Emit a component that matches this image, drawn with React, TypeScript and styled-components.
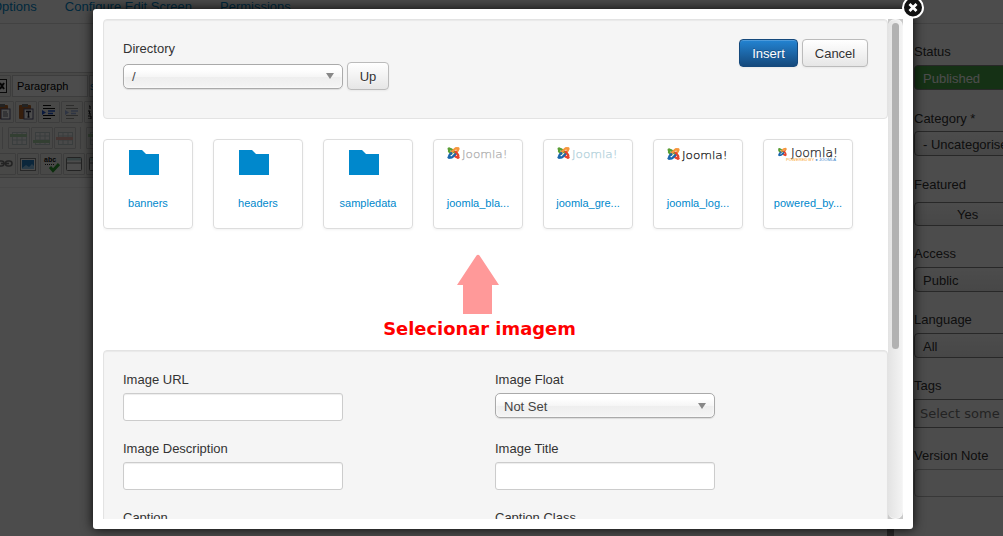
import React from "react";
import styled, { createGlobalStyle } from "styled-components";

const Global = createGlobalStyle`
  * { box-sizing: border-box; }
  html, body { margin: 0; height: 536px; overflow: hidden; background: #fff; }
  body { font: 13px/18px "Liberation Sans", Arial, sans-serif; color: #333; }
`;

const Screen = styled.div`
  position: relative;
  width: 1003px;
  height: 536px;
  overflow: hidden;
`;

/* ---------- page behind the dialog ---------- */
const Page = styled.div`
  display: flex;
  flex-direction: column;
  height: 100%;
`;
const TabBar = styled.nav`
  display: flex;
  flex: none;
  gap: 28px;
  height: 24px;
  margin-left: -8px;
  border-bottom: 1px solid #ddd;
`;
const Tab = styled.a`
  color: #08c;
  line-height: 14px;
  white-space: nowrap;
`;
const Columns = styled.div`
  display: flex;
  flex: 1;
  min-height: 0;
  justify-content: space-between;
`;
const Editor = styled.div`
  width: 894px;
  padding-top: 48px;
`;
const Toolbar = styled.div`
  height: 106px;
  border-top: 1px solid #ccc;
  border-bottom: 1px solid #ccc;
  background: #f0f0ee;
  overflow: hidden;
  padding-top: 2px;
`;
const EditArea = styled.div`
  height: 400px;
  margin-top: 9px;
  border-top: 1px solid #eee;
  border-right: 7px solid #888;
  background: #fff;
`;
const ToolRow = styled.div<{ $offset: number }>`
  display: flex;
  align-items: center;
  gap: 1px;
  height: 22px;
  margin: 0 0 4px ${(p) => p.$offset}px;
`;
const Tool = styled.span<{ $faded?: boolean }>`
  flex: none;
  display: flex;
  align-items: center;
  justify-content: center;
  width: 22px;
  height: 22px;
  border: 1px solid #ccc;
  border-radius: 1px;
  svg { opacity: ${(p) => (p.$faded ? 0.4 : 1)}; }
`;
const Divider = styled.span`
  flex: none;
  width: 1px;
  height: 22px;
  margin: 0 4px 0 3px;
  background: #ccc;
`;
const FormatSelect = styled.span<{ $link?: boolean }>`
  display: flex;
  align-items: center;
  width: 76px;
  height: 22px;
  padding-left: ${(p) => (p.$link ? 0 : 4)}px;
  border: 1px solid #ccc;
  background: #fff;
  color: ${(p) => (p.$link ? "#08c" : "#000")};
  font-size: 11px;
`;

const Sidebar = styled.aside`
  width: 89px;
  padding-top: 18px;
`;
const SideItem = styled.div<{ $height: number; $gap?: number }>`
  display: flex;
  flex-direction: column;
  gap: ${(p) => p.$gap ?? 5}px;
  height: ${(p) => p.$height}px;
  white-space: nowrap;
`;
const SideLabel = styled.label`
  height: 18px;
  line-height: 20px;
`;
const SideControl = styled.div<{ $kind?: "green" | "plain" | "tags" | "button" }>`
  flex: none;
  width: 220px;
  height: ${(p) => (p.$kind === "plain" ? 28 : p.$kind === "tags" ? 29 : p.$kind === "button" ? 24 : 25)}px;
  line-height: ${(p) => (p.$kind === "tags" ? 27 : p.$kind === "button" ? 23 : 25)}px;
  padding-left: ${(p) => (p.$kind === "button" ? 42 : p.$kind === "tags" ? 5 : 8)}px;
  border: 1px solid ${(p) => (p.$kind === "plain" ? "#bbb" : "#888")};
  border-radius: ${(p) => (p.$kind === "tags" ? 0 : 4)}px;
  background: ${(p) =>
    p.$kind === "green" ? "#46a546" : p.$kind === "plain" || p.$kind === "tags" ? "#fff" : "linear-gradient(#fff, #eee)"};
  color: ${(p) => (p.$kind === "green" ? "#fff" : p.$kind === "tags" ? "#777" : "#333")};
  ${(p) => p.$kind === "tags" && `font-family: "DejaVu Sans", sans-serif;`}
`;
const Overlay = styled.div`
  position: absolute;
  inset: 0;
  background: rgba(0, 0, 0, 0.7);
`;

/* ---------- dialog ---------- */
const Dialog = styled.div`
  position: absolute;
  left: 93px;
  top: 9px;
  width: 820px;
  height: 520px;
  padding: 10px;
  border-radius: 3px;
  background: #fff;
  box-shadow: 0 0 12px rgba(0, 0, 0, 0.9);
`;
const Close = styled.button`
  position: absolute;
  right: -12px;
  top: -14px;
  width: 24px;
  height: 25px;
  padding: 0;
  border: 0;
  background: none;
`;
const Frame = styled.div`
  display: flex;
  height: 500px;
  overflow: hidden;
`;
const Content = styled.div`
  width: 785px;
`;
const Well = styled.section<{ $height: number }>`
  height: ${(p) => p.$height}px;
  padding: 19px;
  border: 1px solid #e3e3e3;
  border-radius: 4px;
  background: #f5f5f5;
  box-shadow: inset 0 1px 1px rgba(0, 0, 0, 0.05);
`;
const TopWell = styled(Well)`
  display: flex;
  justify-content: space-between;
  align-items: flex-start;
`;
const Label = styled.label`
  display: block;
  height: 18px;
  line-height: 20px;
`;
const DirRow = styled.div`
  display: flex;
  align-items: center;
  gap: 4px;
  margin-top: 5px;
`;
const Select = styled.div`
  display: flex;
  align-items: center;
  justify-content: space-between;
  width: 220px;
  height: 25px;
  padding: 2px 8px 0;
  border: 1px solid #aaa;
  border-radius: 5px;
  background: linear-gradient(#fff 20%, #f6f6f6 50%, #eee 52%, #f4f4f4 100%);
  box-shadow: inset 0 0 3px #fff, 0 1px 1px rgba(0, 0, 0, 0.1);
  color: #444;
`;
const Caret = styled.i`
  margin-bottom: 2px;
  border: 4px solid transparent;
  border-top: 6px solid #888;
  border-bottom: 0;
`;
const Button = styled.button<{ $primary?: boolean; $width: number }>`
  width: ${(p) => p.$width}px;
  height: 28px;
  padding: 2px 0 0;
  border: 1px solid ${(p) => (p.$primary ? "#15497c" : "#bbb")};
  border-radius: 4px;
  background: ${(p) => (p.$primary ? "linear-gradient(#2384d3, #15497c)" : "linear-gradient(#fff, #e6e6e6)")};
  box-shadow: inset 0 1px 0 rgba(255, 255, 255, 0.2), 0 1px 2px rgba(0, 0, 0, 0.05);
  color: ${(p) => (p.$primary ? "#fff" : "#333")};
  text-shadow: ${(p) => (p.$primary ? "0 -1px 0 rgba(0,0,0,.25)" : "0 1px 1px rgba(255,255,255,.75)")};
  font: 13px/18px "Liberation Sans", Arial, sans-serif;
`;
const Actions = styled.div`
  display: flex;
  gap: 4px;
`;
const Thumbs = styled.div`
  display: flex;
  gap: 20px;
  margin-top: 20px;
`;
const Thumb = styled.a`
  display: flex;
  flex-direction: column;
  align-items: center;
  justify-content: space-between;
  width: 90px;
  height: 90px;
  padding: 6px 0 16px;
  border: 1px solid #ddd;
  border-radius: 4px;
  box-shadow: 0 1px 3px rgba(0, 0, 0, 0.055);
  color: #08c;
  font-size: 11px;
`;
const FolderIcon = styled.svg`
  margin: 4px 8px 0 0;
`;
const Hint = styled.div`
  display: flex;
  flex-direction: column;
  align-items: center;
  width: 193px;
  height: 121px;
  margin-left: 280px;
  padding-top: 25px;
  color: #f00;
  font: bold 17.9px/22px "DejaVu Sans", Verdana, sans-serif;
  white-space: nowrap;
`;
const Arrow = styled.svg`
  margin: 0 3px 4px 0;
`;
const Fields = styled.div`
  display: grid;
  grid-template-columns: 372px 220px;
  grid-auto-rows: 69px;
`;
const Field = styled.div`
  display: flex;
  flex-direction: column;
  gap: 5px;
`;
const Input = styled.input`
  width: 220px;
  height: 28px;
  border: 1px solid #ccc;
  border-radius: 3px;
  background: #fff;
  box-shadow: inset 0 1px 1px rgba(0, 0, 0, 0.075);
`;
const Scrollbar = styled.div`
  width: 15px;
  height: 500px;
  background: #c9c9c9;
`;
const Track = styled.div`
  height: 500px;
  padding: 3px 4px;
  border: solid #f6f6f6;
  border-width: 1px 1px 1px 0;
  border-radius: 7px;
  background: linear-gradient(90deg, #e3e3e3, #f3f3f3);
`;
const Handle = styled.div`
  width: 7px;
  height: 326px;
  border-radius: 4px;
  background: #b2b2b2;
`;

const Folder = () => (
  <FolderIcon width="30" height="25" viewBox="0 0 30 25">
    <path d="M0 0H13L17 4H30V25H0Z" fill="#08c" />
  </FolderIcon>
);

const Mark = () => (
  <g fill="none" strokeWidth="2.4" strokeLinecap="round" strokeLinejoin="round">
    <path d="M1.8 4.7C1.5 2.8 3.5 2.3 4.8 3.5L8.7 7.4" stroke="#5a9e35" />
    <path d="M1.8 4.7C2 5.7 3 6.2 4.2 7.4" stroke="#5a9e35" />
    <path d="M4.7 5.6L7.8 2.6C9 1.4 10.7 1.6 11 3.1" stroke="#f6953b" />
    <path d="M11 3.1C10.8 5 9.6 5.6 8.4 6.9" stroke="#f6953b" />
    <path d="M8.6 5.5L11 8.4C12 10 10.5 11.5 8.8 10.6L7.4 9.3" stroke="#e8432e" />
    <path d="M8.2 8L5.4 10.6C3.9 11.9 1.9 11.3 2 9.6C2.2 8.5 3 8 4.2 6.9" stroke="#1d67ad" />
    <g stroke="none">
      <circle cx="1.9" cy="2.4" r="1.7" fill="#5a9e35" />
      <circle cx="11" cy="2.2" r="1.7" fill="#f6953b" />
      <circle cx="11" cy="11.2" r="1.7" fill="#e8432e" />
      <circle cx="1.9" cy="11.2" r="1.7" fill="#1d67ad" />
    </g>
  </g>
);

const Logo = ({ color, powered, dy = 0 }: { color: string; powered?: boolean; dy?: number }) => (
  <svg width="62" height="18" viewBox="0 0 62 18">
    <g transform={powered ? "translate(1 1.5) scale(.68)" : `translate(.3 ${dy + 0.5}) scale(.97)`}>
      <Mark />
    </g>
    <text
      x={powered ? 14 : 15}
      y={powered ? 10.5 : 11.5 + dy}
      textLength={powered ? 47 : 45.5}
      lengthAdjust="spacingAndGlyphs"
      fill={color}
      fontFamily="'DejaVu Sans', sans-serif"
      fontWeight="200"
      stroke={color}
      strokeWidth=".25"
      fontSize={powered ? 12 : 10.5}
    >
      Joomla!
    </text>
    {powered && (
      <text x="9" y="15.4" fontFamily="Liberation Sans, sans-serif" fontSize="4" textLength="50" lengthAdjust="spacingAndGlyphs">
        <tspan fill="#f9a125">POWERED BY </tspan>
        <tspan fill="#3a85cb">● JOOMLA</tspan>
      </text>
    )}
  </svg>
);

const Clipboard = ({ text }: { text?: boolean }) => (
  <svg width="16" height="16" viewBox="0 0 16 16">
    <rect x="1" y="1" width="12" height="14" rx="1" fill="#b5652b" />
    <rect x="4" y="0" width="6" height="3" fill="#777" />
    <rect x="6" y="5" width="9" height="10" fill="#fff" stroke="#557" />
    <path d={text ? "M8 7.5H13M10.5 7V13M9.5 13H11.5" : "M8 8H12M8 10H13M8 12H13"} stroke="#223" strokeWidth={text ? 1.4 : 0.7} />
  </svg>
);
const Indent = () => (
  <svg width="14" height="14" viewBox="0 0 14 14">
    <path d="M1 .5H9M1 13.5H9M1 3.5H13M1 10.5H13" stroke="#111" />
    <path d="M6 6H13M6 8.5H11" stroke="#25c" strokeWidth="1.5" />
    <path d="M0 5L4 7.5L0 10Z" fill="#25c" />
  </svg>
);
const NumberList = () => (
  <svg width="14" height="14" viewBox="0 0 14 14">
    <path d="M1 1H2V4M0 6H2L1 9H3M0 11H3V14H0" stroke="#111" fill="none" />
    <path d="M5 3H13M5 8H13M5 12H13" stroke="#111" />
  </svg>
);
const TableTool = ({ accent, y }: { accent: string; y: number }) => (
  <svg width="18" height="16" viewBox="0 0 18 16">
    <rect x="2.5" y="2.5" width="14" height="12" fill="#fff" stroke="#799" />
    <path d="M2 6H16M2 10H16M7 3V14M12 3V14" stroke="#799" />
    <rect x="0" y={y} width="17" height="3" fill={accent} />
  </svg>
);
const Chain = () => (
  <svg width="16" height="10" viewBox="0 0 16 10">
    <g fill="none" stroke="#777" strokeWidth="1.6">
      <rect x="1" y="2" width="6" height="5" rx="2.5" />
      <rect x="8.5" y="2" width="6.5" height="5" rx="2.5" />
      <path d="M4 4.5H12" />
    </g>
  </svg>
);
const Picture = () => (
  <svg width="16" height="13" viewBox="0 0 16 13">
    <rect x=".5" y=".5" width="15" height="12" fill="#fff" stroke="#888" />
    <rect x="2" y="2" width="12" height="9" fill="#2580c5" />
    <path d="M2 10L6 7L9 9L12 6L14 8V11H2Z" fill="#8cc6ed" />
  </svg>
);
const SpellCheck = () => (
  <svg width="18" height="18" viewBox="0 0 18 18">
    <text x="2" y="6.5" fontFamily="Liberation Sans, sans-serif" fontWeight="bold" fontSize="7" fill="#111">abc</text>
    <path d="M3 9.5H13" stroke="#222" strokeDasharray="1 1" />
    <path d="M8 12L11 15.5L17 9" stroke="#2c9a30" strokeWidth="3" fill="none" />
  </svg>
);
const Panel = () => (
  <svg width="16" height="14" viewBox="0 0 16 14">
    <rect x=".5" y=".5" width="15" height="13" rx="1" fill="#fff" stroke="#777" />
    <path d="M1 6H15" stroke="#777" />
    <rect x="1" y="1" width="14" height="2.5" fill="#bdd" />
  </svg>
);

const files = [
  { name: "banners", icon: <Folder /> },
  { name: "headers", icon: <Folder /> },
  { name: "sampledata", icon: <Folder /> },
  { name: "joomla_bla...", icon: <Logo color="#b0b0b0" /> },
  { name: "joomla_gre...", icon: <Logo color="#b4d2dc" /> },
  { name: "joomla_log...", icon: <Logo color="#222" dy={1} /> },
  { name: "powered_by...", icon: <Logo color="#222" powered /> },
];

export default function App() {
  return (
    <Screen>
      <Global />
      <Page>
        <TabBar>
          <Tab>Options</Tab>
          <Tab>Configure Edit Screen</Tab>
          <Tab>Permissions</Tab>
        </TabBar>
        <Columns>
          <Editor>
            <Toolbar>
              <ToolRow $offset={-11}>
                <Tool>
                  <svg width="14" height="14" viewBox="0 0 14 14">
                    <rect x=".5" y=".5" width="13" height="13" fill="#fff" stroke="#222" />
                    <path d="M7 4L11 10M11 4L7 10" stroke="#111" strokeWidth="2" />
                  </svg>
                </Tool>
                <FormatSelect>Paragraph</FormatSelect>
                <FormatSelect $link>s</FormatSelect>
              </ToolRow>
              <ToolRow $offset={-8}>
                <Tool><Clipboard /></Tool>
                <Tool><Clipboard text /></Tool>
                <Tool><Indent /></Tool>
                <Tool $faded><Indent /></Tool>
                <Tool><NumberList /></Tool>
              </ToolRow>
              <ToolRow $offset={-1}>
                <Divider />
                <Tool $faded><TableTool accent="#4a4" y={4} /></Tool>
                <Tool $faded><TableTool accent="#4a4" y={10} /></Tool>
                <Tool $faded><TableTool accent="#d54" y={7} /></Tool>
                <Divider />
                <Tool $faded><TableTool accent="#4a4" y={4} /></Tool>
              </ToolRow>
              <ToolRow $offset={-6}>
                <Tool><Chain /></Tool>
                <Tool><Picture /></Tool>
                <Tool><SpellCheck /></Tool>
                <Tool><Panel /></Tool>
                <Tool><Panel /></Tool>
              </ToolRow>
            </Toolbar>
            <EditArea />
          </Editor>
          <Sidebar>
            <SideItem $height={67}><SideLabel>Status</SideLabel><SideControl $kind="green">Published</SideControl></SideItem>
            <SideItem $height={66} $gap={4}><SideLabel>Category *</SideLabel><SideControl>- Uncategorised</SideControl></SideItem>
            <SideItem $height={69} $gap={9}><SideLabel>Featured</SideLabel><SideControl $kind="button">Yes</SideControl></SideItem>
            <SideItem $height={66}><SideLabel>Access</SideLabel><SideControl>Public</SideControl></SideItem>
            <SideItem $height={66}><SideLabel>Language</SideLabel><SideControl>All</SideControl></SideItem>
            <SideItem $height={70}><SideLabel>Tags</SideLabel><SideControl $kind="tags">Select some options</SideControl></SideItem>
            <SideItem $height={69}><SideLabel>Version Note</SideLabel><SideControl $kind="plain" /></SideItem>
          </Sidebar>
        </Columns>
      </Page>
      <Overlay />
      <Dialog>
        <Frame>
          <Content>
            <TopWell $height={100}>
              <div>
                <Label>Directory</Label>
                <DirRow>
                  <Select>/<Caret /></Select>
                  <Button $width={42}>Up</Button>
                </DirRow>
              </div>
              <Actions>
                <Button $primary $width={59}>Insert</Button>
                <Button $width={66}>Cancel</Button>
              </Actions>
            </TopWell>
            <Thumbs>
              {files.map((f) => (
                <Thumb key={f.name}>{f.icon}<span>{f.name}</span></Thumb>
              ))}
            </Thumbs>
            <Hint>
              <Arrow width="42" height="60" viewBox="0 0 42 60">
                <path d="M19.5 1.5Q21 0 22.5 1.5L42 31H35V60H6V31H0Z" fill="#f99" />
              </Arrow>
              Selecionar imagem
            </Hint>
            <Well $height={260}>
              <Fields>
                <Field><Label>Image URL</Label><Input /></Field>
                <Field><Label>Image Float</Label><Select>Not Set<Caret /></Select></Field>
                <Field><Label>Image Description</Label><Input /></Field>
                <Field><Label>Image Title</Label><Input /></Field>
                <Field><Label>Caption</Label></Field>
                <Field><Label>Caption Class</Label></Field>
              </Fields>
            </Well>
          </Content>
          <Scrollbar><Track><Handle /></Track></Scrollbar>
        </Frame>
        <Close aria-label="Close">
          <svg width="24" height="25" viewBox="0 0 24 25">
            <circle cx="12" cy="12.5" r="10" fill="#111" stroke="#fff" strokeWidth="2" />
            <path d="M8.5 9L15.5 16M15.5 9L8.5 16" stroke="#fff" strokeWidth="2.8" />
          </svg>
        </Close>
      </Dialog>
    </Screen>
  );
}
